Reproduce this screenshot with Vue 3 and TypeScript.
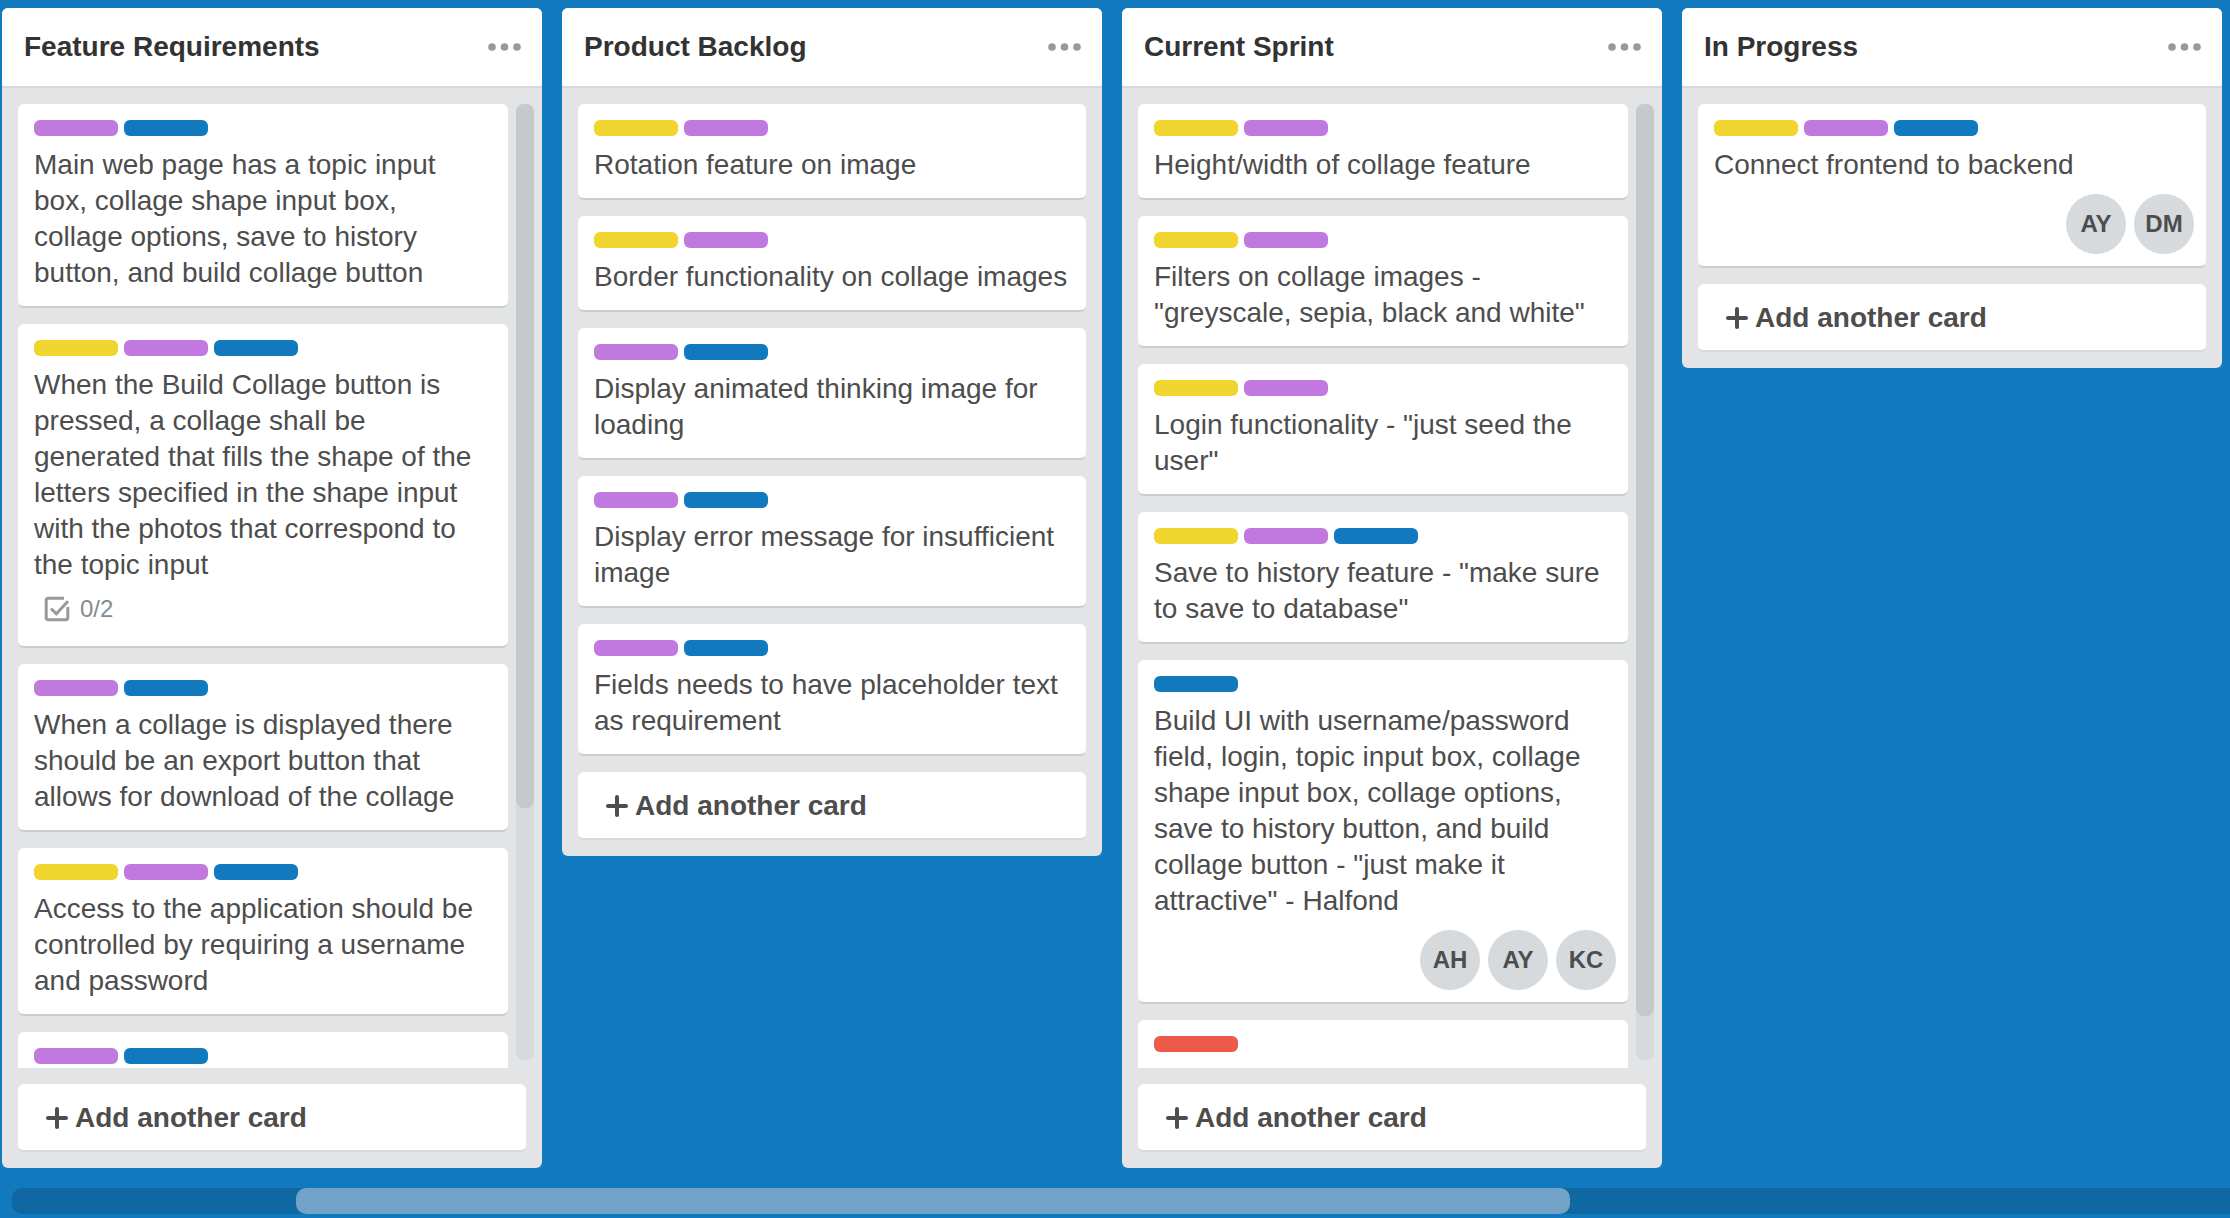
<script setup lang="ts">
type LabelColor = 'yellow' | 'purple' | 'blue' | 'red'

interface Card {
  labels: LabelColor[]
  text: string
  checklist?: string
  members?: string[]
}

interface List {
  title: string
  cards: Card[]
  // Share of the list's track that the scroll thumb covers, in percent
  thumb?: number
}

const lists: List[] = [
  {
    title: 'Feature Requirements',
    thumb: 73.6,
    cards: [
      {
        labels: ['purple', 'blue'],
        text: 'Main web page has a topic input box, collage shape input box, collage options, save to history button, and build collage button',
      },
      {
        labels: ['yellow', 'purple', 'blue'],
        text: 'When the Build Collage button is pressed, a collage shall be generated that fills the shape of the letters specified in the shape input with the photos that correspond to the topic input',
        checklist: '0/2',
      },
      {
        labels: ['purple', 'blue'],
        text: 'When a collage is displayed there should be an export button that allows for download of the collage',
      },
      {
        labels: ['yellow', 'purple', 'blue'],
        text: 'Access to the application should be controlled by requiring a username and password',
      },
      { labels: ['purple', 'blue'], text: '' },
    ],
  },
  {
    title: 'Product Backlog',
    cards: [
      { labels: ['yellow', 'purple'], text: 'Rotation feature on image' },
      { labels: ['yellow', 'purple'], text: 'Border functionality on collage images' },
      { labels: ['purple', 'blue'], text: 'Display animated thinking image for loading' },
      { labels: ['purple', 'blue'], text: 'Display error message for insufficient image' },
      { labels: ['purple', 'blue'], text: 'Fields needs to have placeholder text as requirement' },
    ],
  },
  {
    title: 'Current Sprint',
    thumb: 95.4,
    cards: [
      { labels: ['yellow', 'purple'], text: 'Height/width of collage feature' },
      {
        labels: ['yellow', 'purple'],
        text: 'Filters on collage images - "greyscale, sepia, black and white"',
      },
      { labels: ['yellow', 'purple'], text: 'Login functionality - "just seed the user"' },
      {
        labels: ['yellow', 'purple', 'blue'],
        text: 'Save to history feature - "make sure to save to database"',
      },
      {
        labels: ['blue'],
        text: 'Build UI with username/password field, login, topic input box, collage shape input box, collage options, save to history button, and build collage button - "just make it attractive" - Halfond',
        members: ['AH', 'AY', 'KC'],
      },
      { labels: ['red'], text: '' },
    ],
  },
  {
    title: 'In Progress',
    cards: [
      {
        labels: ['yellow', 'purple', 'blue'],
        text: 'Connect frontend to backend',
        members: ['AY', 'DM'],
      },
    ],
  },
]

const boardScroll = { start: 12.8, size: 57.45 }
</script>

<template>
  <main class="board">
    <div class="lists">
      <section v-for="list in lists" :key="list.title" class="list">
        <header class="list-header">
          <h2>{{ list.title }}</h2>
          <button class="menu" type="button" aria-label="List actions">
            <svg width="34" height="10" viewBox="0 0 34 10" fill="#999">
              <circle cx="5" cy="5" r="3.8" />
              <circle cx="17.5" cy="5" r="3.8" />
              <circle cx="30" cy="5" r="3.8" />
            </svg>
          </button>
        </header>

        <div class="list-body" :class="{ scrolls: list.thumb }">
          <div class="cards">
            <article v-for="(card, i) in list.cards" :key="i" class="card">
              <div class="labels">
                <span v-for="color in card.labels" :key="color" class="label" :class="color"></span>
              </div>
              <p>{{ card.text }}</p>
              <div v-if="card.checklist" class="badge">
                <svg width="26" height="26" viewBox="0 0 26 26" fill="none" stroke="#999" stroke-width="3">
                  <path d="M20 2.2H4a1.8 1.8 0 0 0-1.8 1.8v18A1.8 1.8 0 0 0 4 23.8h18a1.8 1.8 0 0 0 1.8-1.8V11" />
                  <path d="M7 12.5l5.3 5.3L24 5.2" />
                </svg>
                <span>{{ card.checklist }}</span>
              </div>
              <div v-if="card.members" class="members">
                <span v-for="member in card.members" :key="member" class="member">{{ member }}</span>
              </div>
            </article>
          </div>
          <div v-if="list.thumb" class="track">
            <div class="thumb" :style="{ height: list.thumb + '%' }"></div>
          </div>
        </div>

        <button class="add" type="button">
          <svg width="22" height="22" viewBox="0 0 22 22" stroke="#4d4d4d" stroke-width="4" stroke-linecap="round">
            <path d="M11 2v18M2 11h18" />
          </svg>
          <span>Add another card</span>
        </button>
      </section>
    </div>

    <div class="board-track">
      <div
        class="board-thumb"
        :style="{ marginLeft: boardScroll.start + '%', width: boardScroll.size + '%' }"
      ></div>
    </div>
  </main>
</template>

<style>
body {
  margin: 0;
  background: #1179bd;
}
</style>

<style scoped>
.board {
  box-sizing: border-box;
  display: flex;
  flex-direction: column;
  gap: 20px;
  height: 100vh;
  padding: 8px 0 4px;
  overflow: hidden;
  background: #1179bd;
  color: #4d4d4d;
  font-family: 'Helvetica Neue', 'Liberation Sans', Arial, sans-serif;
  font-size: 28px;
  line-height: 36px;
}

.lists {
  display: grid;
  grid-template-columns: repeat(4, minmax(0, 1fr));
  grid-template-rows: minmax(0, 1fr);
  align-items: start;
  gap: 20px;
  flex: 1;
  min-height: 0;
  padding: 0 8px 0 2px;
}

.list {
  box-sizing: border-box;
  display: flex;
  flex-direction: column;
  max-height: 100%;
  padding-bottom: 16px;
  overflow: hidden;
  border-radius: 6px;
  background: #e2e4e6;
}

.list-header {
  display: flex;
  flex: none;
  align-items: center;
  justify-content: space-between;
  height: 78px;
  padding: 0 21px 0 22px;
  border-bottom: 2px solid #d6dadc;
  background: #fff;
}

h2 {
  margin: 0;
  color: #333;
  font-size: 28px;
  font-weight: 700;
}

button {
  border: 0;
  font: inherit;
  color: inherit;
  cursor: pointer;
}

.menu {
  display: flex;
  padding: 0;
  background: none;
}

.list-body {
  display: flex;
  gap: 8px;
  min-height: 0;
  padding: 0 16px;
}

.list-body.scrolls {
  padding-right: 8px;
}

.cards {
  display: flex;
  flex: 1;
  flex-direction: column;
  gap: 16px;
  min-width: 0;
  padding-top: 16px;
  overflow: hidden;
}

.card {
  flex: none;
  padding: 16px 16px 15px;
  border-bottom: 2px solid #c9cbcc;
  border-radius: 6px;
  background: #fff;
}

.labels {
  display: flex;
  gap: 6px;
  margin-bottom: 11px;
}

.label {
  width: 84px;
  height: 16px;
  border-radius: 6px;
}

.yellow {
  background: #f0d52e;
}

.purple {
  background: #c279df;
}

.blue {
  background: #1179bd;
}

.red {
  background: #eb5a4b;
}

p {
  min-height: 36px;
  margin: 0;
}

.badge {
  display: flex;
  align-items: center;
  gap: 10px;
  height: 36px;
  margin: 8px 10px 4px;
  color: #838c91;
  font-size: 24px;
}

.members {
  display: flex;
  justify-content: flex-end;
  gap: 8px;
  margin: 11px -4px -3px 0;
}

.member {
  width: 60px;
  height: 60px;
  border-radius: 50%;
  background: #d6dadc;
  font-size: 24px;
  font-weight: 700;
  line-height: 60px;
  text-align: center;
}

.track {
  width: 18px;
  margin: 16px 0 8px;
  border-radius: 8px;
  background: #d6dadc;
}

.thumb {
  border-radius: 8px;
  background: #c4c9cc;
}

.add {
  display: flex;
  flex: none;
  align-items: center;
  gap: 7px;
  height: 68px;
  margin: 16px 16px 0;
  padding: 2px 28px 0;
  border-bottom: 2px solid #d6dadc;
  border-radius: 6px;
  background: #fff;
  font-weight: 700;
}

.board-track {
  flex: none;
  height: 26px;
  margin-left: 12px;
  border-radius: 10px 0 0 10px;
  background: #0f68a2;
}

.board-thumb {
  height: 26px;
  border-radius: 10px;
  background: #70a3c7;
}
</style>
